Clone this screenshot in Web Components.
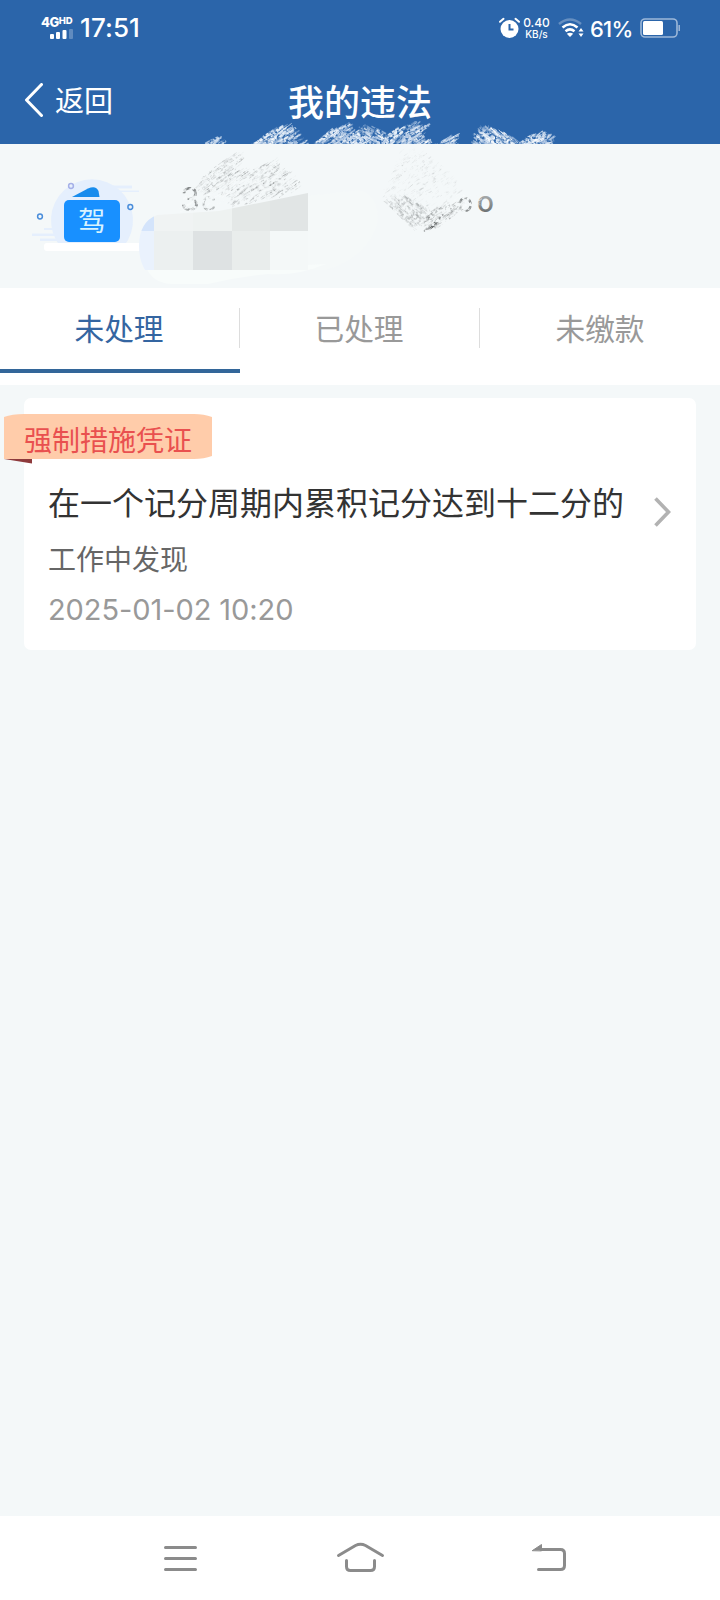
<!DOCTYPE html>
<html lang="zh-CN">
<head>
<meta charset="utf-8">
<title>我的违法</title>
<style>
body{margin:0;background:#f4f8f9;font-family:"Noto Sans CJK SC",sans-serif}
</style>
</head>
<body>
<phone-screen>
  <status-bar slot="top" time="17:51" rate="0.40" battery="61%"></status-bar>
  <nav-header slot="top" back="返回">我的违法</nav-header>
  <licence-banner></licence-banner>
  <tab-strip>
    <tab-item active>未处理</tab-item><tab-item>已处理</tab-item><tab-item>未缴款</tab-item>
  </tab-strip>
  <record-card>
    <ribbon-tag slot="tag">强制措施凭证</ribbon-tag>
    <span slot="title">在一个记分周期内累积记分达到十二分的</span>
    <span slot="desc">工作中发现</span>
    <span slot="date">2025-01-02 10:20</span>
  </record-card>
  <system-nav slot="bottom"></system-nav>
</phone-screen>
<script>
function define(name, html, setup){
  customElements.define(name, class extends HTMLElement{
    constructor(){ super(); this.attachShadow({mode:'open'}).innerHTML = html; }
    connectedCallback(){ if(setup) setup(this, this.shadowRoot); }
  });
}

/* Chalk strokes scattered inside a polygon, from a seeded generator. */
function chalk(poly, angle, count, len, colors, width, opacity, seed){
  let s = seed;
  const rnd = () => { s = (s * 1664525 + 1013904223) >>> 0; return s / 4294967296; };
  const inside = (x, y) => {
    let r = false;
    for(let i = 0, j = poly.length - 1; i < poly.length; j = i++){
      const [a, b] = poly[i], [c, d] = poly[j];
      if((b > y) !== (d > y) && x < (c - a) * (y - b) / (d - b) + a) r = !r;
    }
    return r;
  };
  const xs = poly.map(p => p[0]), ys = poly.map(p => p[1]);
  const x0 = Math.min(...xs), x1 = Math.max(...xs), y0 = Math.min(...ys), y1 = Math.max(...ys);
  let out = '';
  for(let n = 0; n < count;){
    const x = x0 + rnd() * (x1 - x0), y = y0 + rnd() * (y1 - y0);
    if(!inside(x, y)) continue;
    n++;
    const a = (angle + (rnd() - .5) * 12) * Math.PI / 180, l = len * (.3 + rnd());
    const dx = Math.cos(a) * l / 2, dy = Math.sin(a) * l / 2;
    out += `<path d="M${(x-dx).toFixed(1)} ${(y-dy).toFixed(1)}L${(x+dx).toFixed(1)} ${(y+dy).toFixed(1)}" stroke="${colors[Math.floor(rnd()*colors.length)]}" stroke-width="${(width*(.5+rnd())).toFixed(1)}" opacity="${(opacity*(.35+rnd()*.65)).toFixed(2)}"/>`;
  }
  return out;
}

define('phone-screen', `
<style>
:host{display:flex;flex-direction:column;width:720px;height:1600px;background:#f4f8f9;overflow:hidden}
header{background:#2b65aa;flex:none}
main{flex:1}
</style>
<header><slot name="top"></slot></header>
<main><slot></slot></main>
<slot name="bottom"></slot>`);

define('status-bar', `
<style>
:host{display:flex;height:56px;align-items:center;justify-content:space-between;box-sizing:border-box;padding:0 40px 0 41px;color:#fff;font-family:Inter,sans-serif}
.side{display:flex;align-items:center}
.net{width:32px;height:26px;display:flex;flex-direction:column;font:800 13px/14px Inter,sans-serif;letter-spacing:-.5px}
.net sup{font-size:9.500px;line-height:0;vertical-align:3px;letter-spacing:0}
.net svg{margin-left:9px;display:block}
.time{font:500 26px/30px Inter,sans-serif;margin:0 0 0 7px;letter-spacing:.1px}
.rate{display:flex;flex-direction:column;align-items:center;width:27px;margin:0 8px 0 3px;font:500 12px/12px Inter,sans-serif}
.rate span+span{font-size:10px;line-height:11px}
.pct{font:500 22px/28px Inter,sans-serif;margin:1px 8px 0 6px;width:42px;letter-spacing:-.8px;white-space:nowrap}
svg{display:block;flex:none}
</style>
<div class="side">
  <div class="net"><span>4G<sup>HD</sup></span>
    <svg width="24" height="10" viewBox="0 0 24 10" fill="#fff"><rect y="5" width="4" height="5" rx="1"/><rect x="6" y="3" width="4" height="7" rx="1"/><rect x="12.500" y="1" width="4" height="9" rx="1"/><rect x="19" y="0" width="4" height="10" rx="1" opacity=".25"/></svg>
  </div>
  <span class="time"></span>
</div>
<div class="side">
  <svg width="21" height="22" viewBox="0 0 21 22"><circle cx="10.500" cy="12" r="9" fill="#fff"/><path d="M1 4.800L4.500 1.800M20 4.800L16.500 1.800" stroke="#fff" stroke-width="2" stroke-linecap="round"/><path d="M10.500 7v5.500h4" fill="none" stroke="#2b65aa" stroke-width="2"/></svg>
  <div class="rate"><span class="n"></span><span>KB/s</span></div>
  <svg width="26" height="20" viewBox="0 0 26 20" fill="none" stroke="#fff" stroke-width="2.600"><path d="M1 6Q12 -3 23 6" opacity=".28"/><path d="M4.500 9.500Q12 3 19.500 9.500"/><path d="M7.500 13.200Q12 9.500 16.500 13.200"/><path d="M12 19l-3.200-3.200q3.200-2.300 6.400 0z" fill="#fff" stroke="none"/><path d="M20.500 13.500l2.500-3.500 2.500 3.500zM20.500 15.500l2.500 3.500 2.500-3.500z" fill="#fff" stroke="none"/></svg>
  <span class="pct"></span>
  <svg width="40" height="20" viewBox="0 0 40 20"><rect x="1" y="1" width="36" height="18" rx="4" fill="none" stroke="#9db8d9" stroke-width="1.600"/><rect x="3" y="3" width="20" height="14" rx="1.500" fill="#fff"/><path d="M39.200 7v6" stroke="#9db8d9" stroke-width="1.500"/></svg>
</div>`, (el, r) => {
  r.querySelector('.time').textContent = el.getAttribute('time');
  r.querySelector('.n').textContent = el.getAttribute('rate');
  r.querySelector('.pct').textContent = el.getAttribute('battery');
});

define('nav-header', `
<style>
:host{display:grid;grid-template-columns:1fr auto 1fr;align-items:center;height:88px;position:relative;color:#fff;overflow:hidden}
.back{display:flex;align-items:center;gap:12px;padding-left:24px;font-size:29px;line-height:40px}
.back span{margin-top:-3px}
.title{font-size:36px;font-weight:500;line-height:50px;margin-top:-1px}
.chalk{position:absolute;left:0;top:0;z-index:0}
.title,.back{z-index:1}
</style>
<svg class="chalk" width="720" height="88" viewBox="0 56 720 88">
  <filter id="grain" x="0" y="0" width="100%" height="100%"><feTurbulence type="fractalNoise" baseFrequency=".35" numOctaves="2" seed="4"/><feColorMatrix values="0 0 0 0 0 0 0 0 0 0 0 0 0 0 0 4 0 0 0 -1"/><feComposite in="SourceGraphic" operator="in"/></filter>
  <g class="marks" filter="url(#grain)"></g>
</svg>
<div class="back"><svg width="19" height="34" viewBox="0 0 19 34"><path d="M17.500 1.500L2.500 17l15 15.500" fill="none" stroke="#fff" stroke-width="3" stroke-linecap="round" stroke-linejoin="round"/></svg><span></span></div>
<div class="title"><slot></slot></div>`, (el, r) => {
  r.querySelector('.back span').textContent = el.getAttribute('back');
  const c = ['#fff', '#dce8f6', '#c5d7ed', '#f4f9fd', '#a5bfe0'];
  r.querySelector('.marks').innerHTML =
    chalk([[203,146],[212,139],[217,137],[226,146]], -33, 26, 8, c, 1.5, .9, 3) +
    chalk([[252,146],[266,133],[286,125],[290,130],[297,134],[306,146]], -33, 150, 11, c, 1.6, .8, 7) +
    chalk([[313,146],[330,131],[351,123],[354,131],[374,146]], -33, 160, 11, c, 1.6, .8, 11) +
    chalk([[362,126],[380,128],[396,146],[350,146]], 34, 100, 9, c, 1.6, .8, 13) +
    chalk([[376,146],[396,129],[414,123],[426,128],[424,138],[430,146]], -33, 150, 11, c, 1.6, .8, 17) +
    chalk([[430,146],[457,134],[456,146]], -33, 40, 8, c, 1.5, .85, 19) +
    chalk([[475,146],[477,132],[489,128],[502,131],[516,140],[520,146]], 38, 140, 9, c, 1.6, .8, 23) +
    chalk([[516,146],[530,136],[544,132],[546,136],[552,137],[549,146]], -33, 90, 9, c, 1.6, .8, 29);
});

define('licence-banner', `
<style>
:host{display:block;height:144px}
svg{display:block}
text{font-family:Inter,sans-serif}
.jia{font-family:"Noto Sans CJK SC",sans-serif}
</style>
<svg width="720" height="144" viewBox="0 144 720 144">
  <filter id="grain" filterUnits="userSpaceOnUse" x="160" y="144" width="360" height="100"><feTurbulence type="fractalNoise" baseFrequency=".3" numOctaves="2" seed="8"/><feColorMatrix values="0 0 0 0 0 0 0 0 0 0 0 0 0 0 0 3.500 0 0 0 -1.200"/><feComposite in="SourceGraphic" operator="in"/></filter>
  <linearGradient id="worn" x1="0" y1="0" x2="0" y2="1"><stop offset=".2" stop-color="#b4b8b9"/><stop offset="1" stop-color="#555a5b"/></linearGradient>
  <g fill="#e5effd">
    <path d="M60 244a41 41 0 1 1 64 0z" transform="translate(0 2)"/>
    <path d="M112 185.500h20v3h-20zM118 190.500h21v1.500h-21zM32 233.500h30v2.500H32zM44 228h12v2H44zM40 238.500h18v2.500H40z"/>
  </g>
  <rect x="44" y="243" width="102" height="8" rx="3" fill="#fff"/>
  <path d="M72 197l16-8.500q8-3.500 10.500 2.500l1 6z" fill="#188ced"/>
  <rect x="64" y="200" width="56" height="42" rx="5" fill="#1890ff"/>
  <text class="jia" x="78" y="230.500" font-size="27.500" fill="#d8f3ff">驾</text>
  <g fill="none" stroke-width="1.500"><circle cx="40" cy="216.500" r="2.400" stroke="#4b8edb"/><circle cx="130.300" cy="207" r="2.400" stroke="#4b8edb"/><circle cx="71" cy="186" r="2.400" stroke="#a5b0e8"/></g>
  <path d="M160 270h165c30-8 48-27 53-50q0-26-20-30l-50 6v74z" fill="#f5f9f9"/>
  <path d="M145 265q7 19 28 19l35 0q30-7 60-10 30 2 58-10l-40 2H145z" fill="#f8fcfb"/>
  <clipPath id="blob"><path d="M139 246q0-24 18-31l62-4 50-10 39-8v77H145q-6-10-6-24z"/></clipPath>
  <g clip-path="url(#blob)" shape-rendering="crispEdges">
    <path d="M139 190h15v41h-15z" fill="#d4e4fb"/><path d="M139 231h15v39h-15z" fill="#eaf2fd"/>
    <path d="M154 190h39v41h-39z" fill="#f0f3f3"/><path d="M193 190h39v41h-39z" fill="#eef2f1"/>
    <path d="M232 190h38v41h-38z" fill="#e4e8e7"/><path d="M270 190h39v41h-39z" fill="#e1e5e5"/>
    <path d="M154 231h39v39h-39z" fill="#ecf0f0"/><path d="M193 231h39v39h-39z" fill="#dee2e3"/>
    <path d="M232 231h38v39h-38z" fill="#e9edec"/><path d="M270 231h39v39h-39z" fill="#f4f8f8"/>
  </g>
  <text x="477" y="212" font-size="28" font-weight="500" fill="url(#worn)">o</text>
  <g filter="url(#grain)">
    <text x="180" y="211" font-size="32" fill="#85898a">3</text>
    <text x="201" y="211" font-size="27" fill="#b5b9ba">c</text>
    <text x="457" y="212" font-size="27" fill="#8a8e8f">o</text>
    <g class="marks"></g>
  </g>
</svg>`, (el, r) => {
  const dark = ['#7d8182', '#a5a9aa', '#bec2c3', '#d0d4d5', '#dadedf'], pale = ['#f4f8f9', '#fafdfd'];
  r.querySelector('.marks').innerHTML =
    chalk([[195,188],[212,168],[237,152],[242,152],[241,166],[234,180],[212,194]], -35, 200, 9, dark, .8, .7, 31) +
    chalk([[222,192],[232,170],[252,170],[275,160],[278,166],[298,182],[300,190],[268,199],[234,205]], -33, 360, 9, dark, .8, .7, 37) +
    chalk([[205,188],[230,172],[300,176],[290,188],[225,204],[200,200]], -33, 60, 11, pale, 1.2, .9, 41) +
    chalk([[181,186],[199,186],[216,198],[214,212],[181,212]], -38, 30, 8, pale, 1.2, .9, 43) +
    chalk([[401,148],[416,150],[440,162],[462,190],[440,212],[384,204],[382,192],[395,170]], -35, 330, 5, ['#c5c9ca','#d5d9da','#e2e6e7'], .8, .65, 47) +
    chalk([[386,203],[404,196],[428,208],[424,222],[412,228]], 42, 260, 8, ['#a5a9aa','#b9bdbe','#cfd3d4'], 1, .7, 53) +
    chalk([[426,230],[424,218],[432,210],[462,200],[464,206],[442,226]], -35, 130, 7, ['#777b7c','#a5a9aa','#bcc0c1'], 1, .7, 59) +
    chalk([[426,230],[437,219],[440,222],[430,230]], -38, 22, 6, ['#333738','#4d5152'], 1.1, .8, 61) +
    chalk([[455,194],[470,194],[464,210],[455,210]], -38, 20, 6, pale, 1.4, .95, 67) +
    chalk([[477,195],[486,195],[486,204],[477,208]], -38, 6, 5, pale, 1.1, .7, 71);
});

define('tab-strip', `
<style>:host{display:flex;height:97px;background:#fff}</style><slot></slot>`);

define('tab-item', `
<style>
:host{flex:0 0 240px;display:flex;flex-direction:column;height:85px;color:#999;font-size:29.700px;line-height:42px;text-align:center;box-sizing:border-box;padding:19px 2px 0 0;border-bottom:4px solid transparent;background:linear-gradient(#ddd,#ddd) 239px 20px/1px 40px no-repeat}
:host(:last-of-type){background:none;padding-right:0}
:host([active]){color:#3465a1;border-bottom-color:#336699}
</style><span><slot></slot></span>`);

define('record-card', `
<style>
:host{display:grid;grid-template-columns:1fr 17px;margin:13px 24px 0;height:252px;padding:15px 25px 0 24px;box-sizing:border-box;background:#fff;border-radius:7px;align-content:start}
.tag{grid-column:1/3;margin-left:-44px;height:51px}
.body{display:flex;flex-direction:column;white-space:nowrap}
.t{font-size:32px;line-height:46px;color:#333;margin-top:14px}
.d{font-size:28px;line-height:40px;color:#666;margin-top:14px}
.s{font:400 29px/36px Inter,sans-serif;color:#999;margin-top:14px;letter-spacing:-.08px}
svg{margin-top:33px}
</style>
<div class="tag"><slot name="tag"></slot></div>
<div class="body"><div class="t"><slot name="title"></slot></div><div class="d"><slot name="desc"></slot></div><div class="s"><slot name="date"></slot></div></div>
<svg width="17" height="30" viewBox="0 0 17 30"><path d="M1.500 1.500L14.500 15l-13 13.500" fill="none" stroke="#b2b2b2" stroke-width="3.600"/></svg>`);

define('ribbon-tag', `
<style>
:host{display:grid;width:208px;height:51px;color:#e9504f;font-size:28px;line-height:46px;white-space:nowrap}
svg,span{grid-area:1/1}
span{padding:3px 0 0 20px}
</style>
<svg width="208" height="51" viewBox="0 0 208 51"><path d="M0 46h28v4.500z" fill="#8e3a3c"/><path d="M0 4Q8 1 20 1H190Q200 1 208 4V43Q200 46 190 46H0z" fill="#ffccaa"/></svg><span><slot></slot></span>`);

define('system-nav', `
<style>
:host{display:flex;justify-content:center;align-items:center;height:84px;background:#fff;flex:none}
svg{display:block}
</style>
<svg width="480" height="84" viewBox="120 1516 480 84" fill="none" stroke="#8b8b8b" stroke-width="3" stroke-linecap="round" stroke-linejoin="round">
  <path d="M165.500 1547.500h30M165.500 1558.500h30M165.500 1569.500h30"/>
  <path d="M338.500 1555.500L355.500 1545.500Q360.500 1543 365.500 1545.500L382.500 1555.500M346.500 1560.500v6q0 4 4 4h20q4 0 4-4v-6"/>
  <path d="M541 1549.500h19.500q4 0 4 4v12q0 4-4 4H538.500"/>
  <path d="M532.500 1550.500l9-6v6z" fill="#8b8b8b" stroke-width="1"/>
</svg>`);
</script>
</body>
</html>
